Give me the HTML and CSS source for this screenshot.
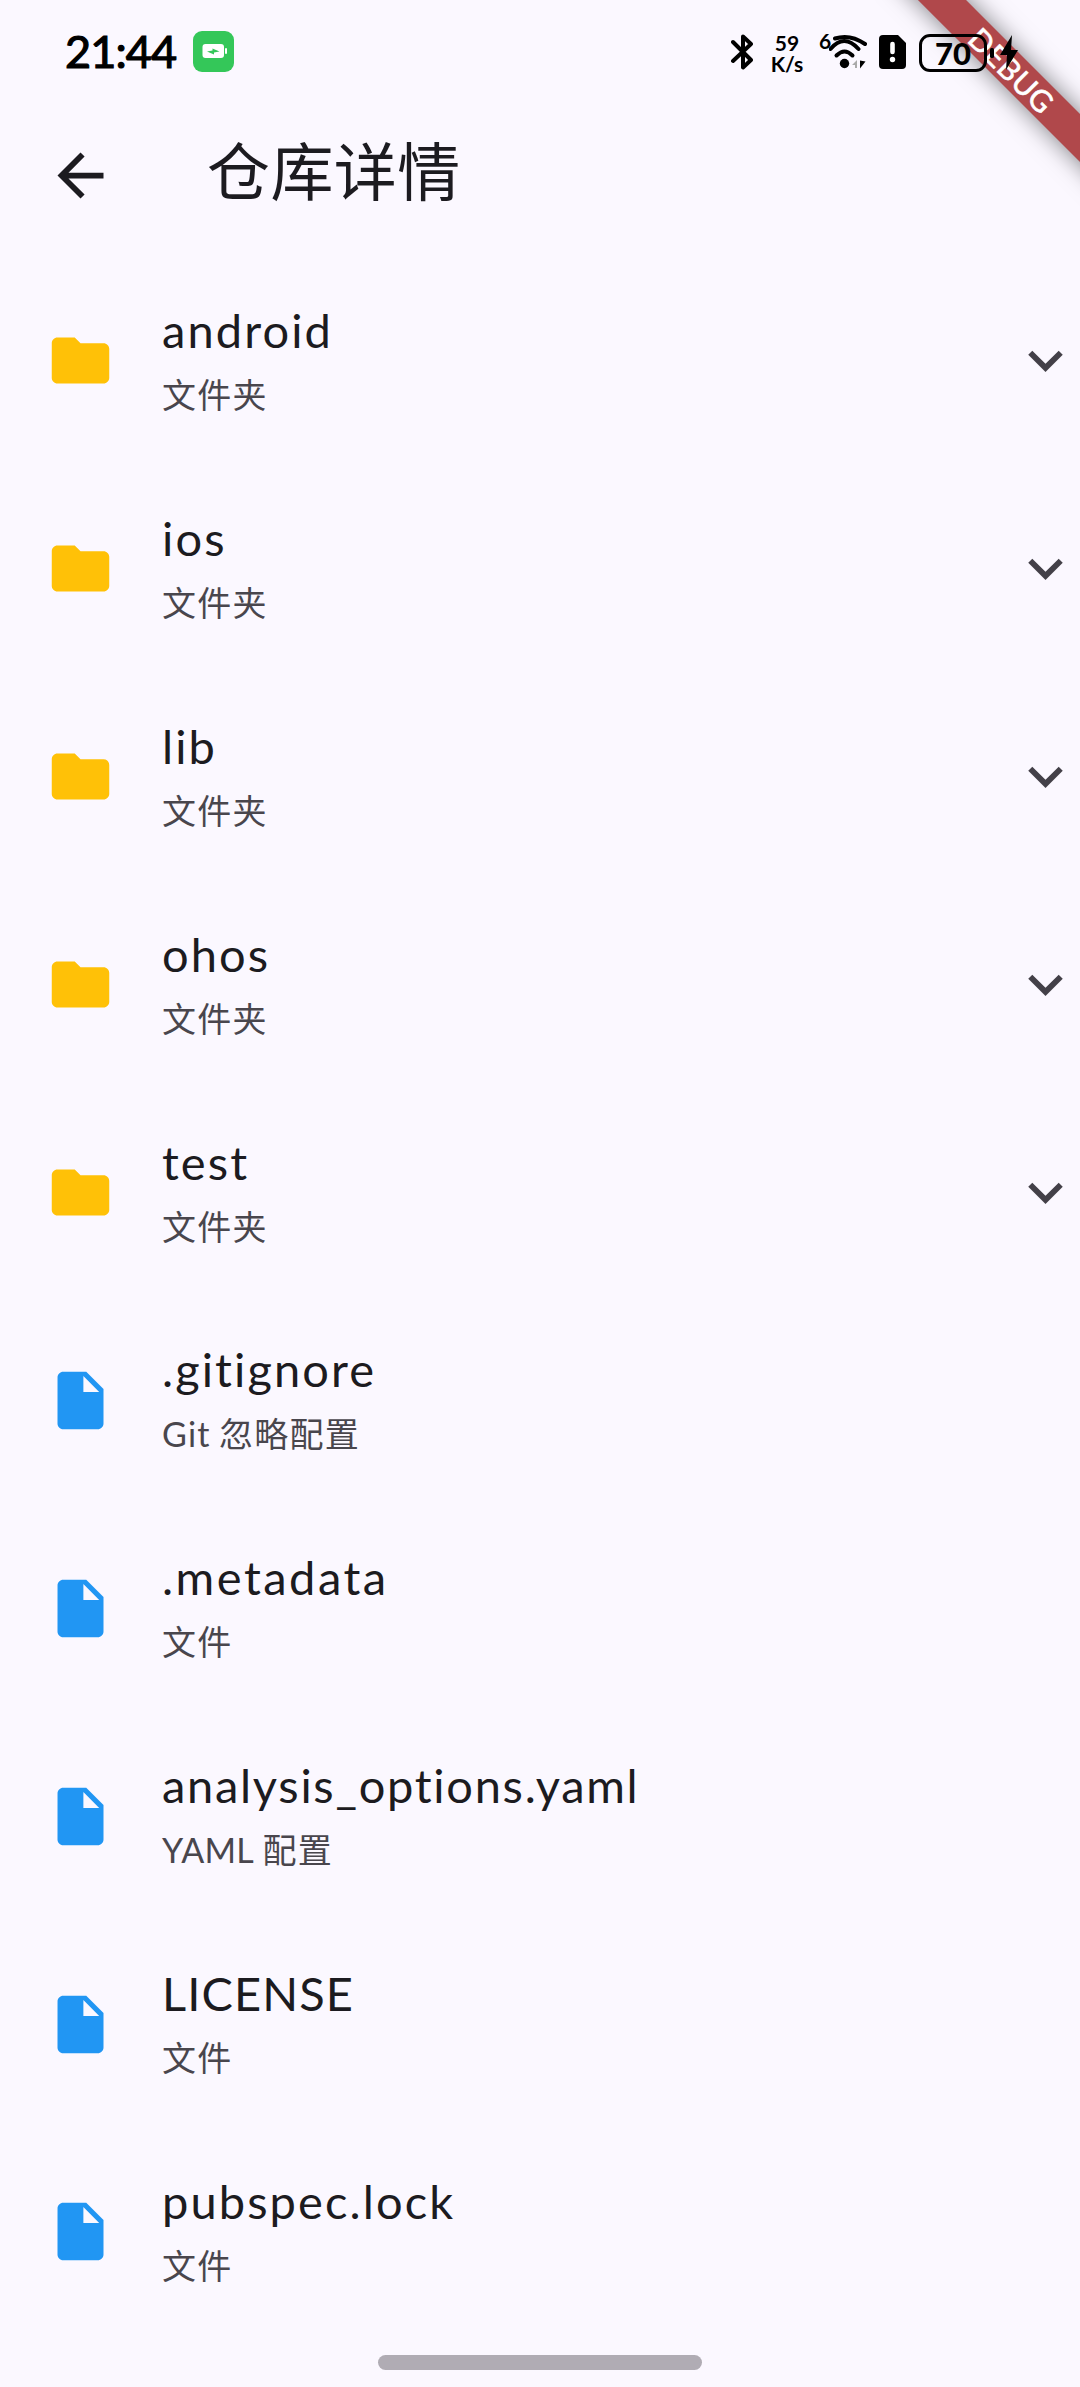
FILE: index.html
```html
<!DOCTYPE html>
<html lang="zh-CN">
<head>
<meta charset="utf-8">
<title>仓库详情</title>
<link rel="stylesheet" href="styles.css">
</head>
<body>
<svg class="defs" aria-hidden="true">
  <symbol id="folder" viewBox="0 0 24 24"><path d="M10 4H4c-1.1 0-1.99.9-1.99 2L2 18c0 1.1.9 2 2 2h16c1.1 0 2-.9 2-2V8c0-1.1-.9-2-2-2h-8l-2-2z"/></symbol>
  <symbol id="file" viewBox="0 0 24 24"><path d="M6 2c-1.1 0-1.99.9-1.99 2L4 20c0 1.1.89 2 1.99 2H18c1.1 0 2-.9 2-2V8l-6-6H6zm7 7V3.5L18.5 9H13z"/></symbol>
  <symbol id="more" viewBox="0 0 24 24"><path d="M16.59 8.59L12 13.17 7.41 8.59 6 10l6 6 6-6z"/></symbol>
</svg>
<div class="screen">
  <div class="banner"><span class="banner-strip">DEBUG</span></div>
  <header class="status">
    <span class="time">21:44</span>
    <svg class="charge-app" viewBox="0 0 41 41"><rect width="41" height="41" rx="9" fill="#34c759"/><rect x="9.5" y="13" width="21.5" height="14" rx="3" fill="#fff"/><rect x="32" y="17" width="2" height="6" rx="1" fill="#fff"/><path d="M14 20.500l5.500-1v-2l7 3-5.500 1v2z" fill="#34c759"/></svg>
    <span class="spacer"></span>
    <svg class="bt" viewBox="0 0 22 36"><path d="M2 8l18 18-8 7.500V2.500L20 10 2 27" fill="none" stroke="#000" stroke-width="4" stroke-linejoin="round" stroke-linecap="round"/></svg>
    <span class="speed"><span>59</span><span>K/s</span></span>
    <span class="wifi-gen">6</span>
    <svg class="wifi" viewBox="0 0 38 36"><g fill="none" stroke="#000" stroke-width="4" stroke-linecap="round"><path d="M6 4.500Q21-.5 36 10"/><path d="M1.500 15Q15-1 29.500 15"/><path d="M7.500 21.500Q15.500 13.500 23.500 21.500"/></g><circle cx="15.500" cy="29.500" r="4.700"/><path d="M23 31l5-5v8h-2v-3z" fill="#aaa"/><path d="M31 26.500v8l5.500-7z"/></svg>
    <svg class="sim" viewBox="0 0 27 34"><path d="M4 0h15l8 8v22a4 4 0 0 1-4 4H4a4 4 0 0 1-4-4V4a4 4 0 0 1 4-4z"/><path d="M13.500 9v8" stroke="#fff" stroke-width="4.600" stroke-linecap="round"/><circle cx="13.500" cy="24.500" r="2.700" fill="#fff"/></svg>
    <span class="battery">70</span>
    <svg class="bolt" viewBox="0 0 28 36"><rect y="13" width="4" height="10" rx="1.500"/><path d="M22 0L10 20h7l-1 15 12-20h-7z"/></svg>
  </header>
  <div class="appbar">
    <svg class="icon back" viewBox="0 0 24 24"><path d="M7.825 13l5.600 5.600L12 20l-8-8 8-8 1.425 1.400-5.600 5.600H20v2z"/></svg>
    <h1>仓库详情</h1>
  </div>
  <main class="list">
    <div class="row"><svg class="icon folder"><use href="#folder"/></svg><div class="text"><div class="name">android</div><div class="sub">文件夹</div></div><svg class="icon more"><use href="#more"/></svg></div>
    <div class="row"><svg class="icon folder"><use href="#folder"/></svg><div class="text"><div class="name">ios</div><div class="sub">文件夹</div></div><svg class="icon more"><use href="#more"/></svg></div>
    <div class="row"><svg class="icon folder"><use href="#folder"/></svg><div class="text"><div class="name">lib</div><div class="sub">文件夹</div></div><svg class="icon more"><use href="#more"/></svg></div>
    <div class="row"><svg class="icon folder"><use href="#folder"/></svg><div class="text"><div class="name">ohos</div><div class="sub">文件夹</div></div><svg class="icon more"><use href="#more"/></svg></div>
    <div class="row"><svg class="icon folder"><use href="#folder"/></svg><div class="text"><div class="name">test</div><div class="sub">文件夹</div></div><svg class="icon more"><use href="#more"/></svg></div>
    <div class="row"><svg class="icon file"><use href="#file"/></svg><div class="text"><div class="name">.gitignore</div><div class="sub">Git 忽略配置</div></div></div>
    <div class="row"><svg class="icon file"><use href="#file"/></svg><div class="text"><div class="name loose">.metadata</div><div class="sub">文件</div></div></div>
    <div class="row"><svg class="icon file"><use href="#file"/></svg><div class="text"><div class="name long">analysis_options.yaml</div><div class="sub"><span class="latin">YAML</span> 配置</div></div></div>
    <div class="row"><svg class="icon file"><use href="#file"/></svg><div class="text"><div class="name caps">LICENSE</div><div class="sub">文件</div></div></div>
    <div class="row"><svg class="icon file"><use href="#file"/></svg><div class="text"><div class="name">pubspec.lock</div><div class="sub">文件</div></div></div>
  </main>
  <div class="home"></div>
</div>
</body>
</html>
```
FILE: styles.css
```css
* { box-sizing: border-box; }
body { margin: 0; background: #fbf8ff; color: #1c1b20; font-family: Lato, "Noto Sans CJK SC", sans-serif; }
.defs { position: absolute; width: 0; height: 0; }
.screen { position: relative; display: flex; flex-direction: column; width: 1080px; height: 2387px; overflow: hidden; }

.status { position: relative; display: flex; align-items: flex-start; height: 106px; padding: 31px 62px 0 65px; color: #000; }
.time { width: 128px; font-size: 45px; line-height: 41px; letter-spacing: -.9px; white-space: nowrap; -webkit-text-stroke: 1.2px #000; }
.charge-app { width: 41px; height: 41px; }
.spacer { flex: 1; }
.bt { width: 22px; height: 36px; margin: 3px 15px 0 0; }
.speed { display: flex; flex-direction: column; align-items: center; width: 38px; font-size: 21px; line-height: 21px; font-weight: 700; margin: 1px 13px 0 0; }
.wifi-gen { width: 10px; font-size: 21px; line-height: 20px; font-weight: 700; }
.wifi { width: 38px; height: 36px; margin: 3px 12px 0 0; }
.sim { width: 27px; height: 34px; margin: 4px 13px 0 0; }
.battery { width: 68px; height: 38px; border: 3px solid #000; border-radius: 11px; margin: 3px 3px 0 0; font-size: 31px; line-height: 32px; font-weight: 900; text-align: center; }
.bolt { width: 28px; height: 36px; margin-top: 4px; }

.banner { position: absolute; top: 0; right: 0; width: 240px; height: 240px; overflow: hidden; }
.banner-strip { position: absolute; left: 22px; top: 53px; width: 300px; height: 34px; transform: rotate(45deg); background: #b0484b; box-shadow: 0 0 24px rgba(0,0,0,.5); color: #fff; font-size: 30px; line-height: 34px; letter-spacing: .5px; text-align: center; -webkit-text-stroke: .6px #fff; }

.appbar { display: flex; align-items: center; height: 139px; padding: 0 46px; gap: 92px; }
.icon { flex: none; width: 69px; height: 69px; fill: #1c1b20; }
h1 { margin: 0; padding-bottom: 9px; font-size: 63px; line-height: 80px; font-weight: 400; letter-spacing: .4px; }

.list { display: flex; flex-direction: column; padding-top: 12px; }
.row { display: flex; align-items: center; height: 207.900px; padding-left: 46px; }
.text { display: flex; flex-direction: column; flex: 1; gap: 9px; margin-left: 47px; padding-bottom: 4px; }
.name { font-size: 47px; line-height: 62px; letter-spacing: 2.100px; white-space: nowrap; }
.name.long { letter-spacing: 1.700px; }
.name.loose { letter-spacing: 2.500px; }
.name.caps { letter-spacing: 1.100px; }
.sub { font-size: 34px; line-height: 49px; letter-spacing: 1.200px; word-spacing: -1.500px; color: #49464d; }
.latin { letter-spacing: .3px; }
.icon.folder { fill: #ffc107; }
.icon.file { fill: #2196f3; }
.icon.more { fill: #434048; }

.home { position: absolute; left: 378px; top: 2355px; width: 324px; height: 15px; border-radius: 8px; background: #b0acb4; }
```
